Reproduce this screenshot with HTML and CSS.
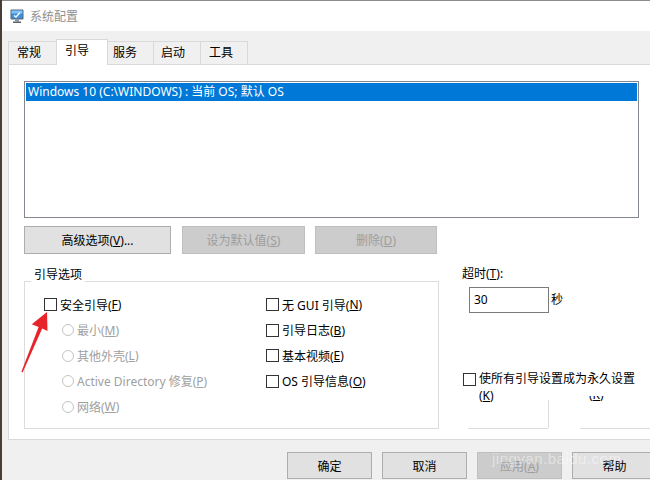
FILE: index.html
```html
<!DOCTYPE html>
<html lang="zh-CN">
<head>
  <meta charset="UTF-8" />
  <title>系统配置</title>
  <link rel="stylesheet" href="styles.css">
</head>
<body>
  <div class="window">
    <div class="titlebar">
      <svg class="app-icon" width="14" height="14" viewBox="0 0 14 14">
        <rect x="0.5" y="0.5" width="13" height="10" rx="1" fill="#5a6470"/>
        <rect x="1.5" y="1.5" width="11" height="8" fill="#3d8fe0"/>
        <rect x="1.5" y="1.5" width="11" height="3" fill="#7cc0f5"/>
        <path d="M4 6.5 L6 8 L10 3.5" stroke="#ffffff" stroke-width="1.3" fill="none"/>
        <rect x="5" y="10.5" width="4" height="2" fill="#8a929a"/>
        <rect x="3" y="12.5" width="8" height="1.5" fill="#5a6470"/>
      </svg>
      <span class="title">系统配置</span>
    </div>

    <div class="tabs">
      <div class="tab t1">常规</div>
      <div class="tab t2 active">引导</div>
      <div class="tab t3">服务</div>
      <div class="tab t4">启动</div>
      <div class="tab t5">工具</div>
    </div>

    <div class="panel">
      <div class="listbox">
        <div class="list-item selected">Windows 10 (C:\WINDOWS) : 当前 OS; 默认 OS</div>
      </div>

      <div class="btn-row">
        <button class="btn b-adv">高级选项(<u>V</u>)...</button>
        <button class="btn b-def" disabled>设为默认值(<u>S</u>)</button>
        <button class="btn b-del" disabled>删除(<u>D</u>)</button>
      </div>

      <div class="lower">
        <div class="group">
          <span class="group-title">引导选项</span>
          <div class="cols">
            <div class="col col-left">
              <div class="row"><span class="box"></span>安全引导(<u>F</u>)</div>
              <div class="row radio"><span class="circle"></span>最小(<u>M</u>)</div>
              <div class="row radio"><span class="circle"></span>其他外壳(<u>L</u>)</div>
              <div class="row radio"><span class="circle"></span>Active Directory 修复(<u>P</u>)</div>
              <div class="row radio"><span class="circle"></span>网络(<u>W</u>)</div>
            </div>
            <div class="col col-right">
              <div class="row"><span class="box"></span>无 GUI 引导(<u>N</u>)</div>
              <div class="row"><span class="box"></span>引导日志(<u>B</u>)</div>
              <div class="row"><span class="box"></span>基本视频(<u>E</u>)</div>
              <div class="row"><span class="box"></span>OS 引导信息(<u>O</u>)</div>
            </div>
          </div>
        </div>

        <div class="side">
          <div class="timeout-label">超时(<u>T</u>):</div>
          <div class="timeout-row">
            <div class="input">30</div>
            <span class="unit">秒</span>
          </div>
          <div class="perm">
            <span class="box"></span>
            <span class="perm-text">使所有引导设置成为永久设置<br>(<u>K</u>)</span>
          </div>
        </div>
      </div>

      <!-- leftovers of the overlapping capture -->
      <div class="ghost-line v1"></div>
      <div class="ghost-line h1"></div>
      <div class="ghost-line h2"></div>
      <div class="ghost-k"><span>(<u>K</u>)</span></div>
    </div>

    <div class="footer">
      <button class="btn fbtn">确定</button>
      <button class="btn fbtn">取消</button>
      <button class="btn fbtn" disabled>应用(<u>A</u>)</button>
      <button class="btn fbtn">帮助</button>
      <span class="watermark">jingyan.baidu.com</span>
    </div>

    <svg class="arrow" width="650" height="480" viewBox="0 0 650 480">
      <polygon fill="#e8242b" points="47,312 47.5,331 42.2,328.6 22.6,372.4 21.4,371.8 38.6,327 31.8,324.2"/>
    </svg>
  </div>
</body>
</html>
```

FILE: styles.css
```css
body {
  margin: 0;
  font-family: "Noto Sans", "Noto Sans CJK SC", sans-serif;
  font-size: 12px;
  color: #000;
}
.window {
  position: relative;
  width: 648px;
  height: 480px;
  overflow: hidden;
  background: #f0f0f0;
  border-left: 2px solid #4a3d35;
}
.titlebar {
  height: 30px;
  background: #fff;
  border-top: 1px solid #8c8c8c;
  display: flex;
  align-items: center;
  padding-left: 8px;
}
.app-icon {
  margin-right: 6px;
  margin-top: -1px;
}
.title {
  color: #8f8f8f;
  font-size: 12px;
}

/* tabs */
.tabs {
  height: 33px;
  display: flex;
  align-items: flex-end;
  padding-left: 6px;
}
.tab {
  box-sizing: border-box;
  height: 23px;
  line-height: 21px;
  padding-left: 8px;
  border: 1px solid #d9d9d9;
  border-bottom: none;
  background: #f0f0f0;
  margin-right: -1px;
}
.tab.t1 { width: 49px; }
.tab.t2 { width: 52px; }
.tab.t3 { width: 47px; padding-left: 5px; }
.tab.t4 { width: 48px; padding-left: 7px; }
.tab.t5 { width: 48px; }
.tab.active {
  height: 26px;
  line-height: 22px;
  background: #fff;
  margin-bottom: -1px;
  position: relative;
  z-index: 1;
}

/* panel */
.panel {
  position: relative;
  box-sizing: border-box;
  height: 376px;
  margin-left: 6px;
  background: #fff;
  border: 1px solid #d9d9d9;
  border-right: none;
  padding: 16px 0 0 15px;
}
.listbox {
  box-sizing: border-box;
  width: 615px;
  height: 137px;
  border: 1px solid #828790;
  padding: 1px;
}
.list-item {
  height: 18px;
  line-height: 18px;
  padding-left: 2px;
}
.list-item.selected {
  background: #0078d7;
  color: #fff;
}

.btn-row {
  display: flex;
  margin-top: 8px;
}
.btn {
  box-sizing: border-box;
  height: 28px;
  border: 1px solid #adadad;
  background: #e1e1e1;
  font-family: inherit;
  font-size: 12px;
  color: #000;
  padding: 0;
}
.btn:disabled {
  background: #cccccc;
  border-color: #bfbfbf;
  color: #9d9d9d;
}
.b-adv { width: 147px; }
.b-def { width: 123px; margin-left: 11px; }
.b-del { width: 122px; margin-left: 10px; }

/* lower area */
.lower {
  display: flex;
}
.group {
  position: relative;
  box-sizing: border-box;
  width: 415px;
  height: 148px;
  margin-top: 27px;
  border: 1px solid #dcdcdc;
  padding: 10px 0 0 19px;
}
.group-title {
  position: absolute;
  top: -15px;
  left: 6px;
  padding: 0 3px;
  line-height: 16px;
  background: #fff;
}
.cols {
  display: flex;
}
.col-left { width: 222px; }
.row {
  height: 25.5px;
  display: flex;
  align-items: center;
}
.box {
  box-sizing: border-box;
  width: 13px;
  height: 13px;
  border: 1px solid #333;
  margin-right: 3px;
  flex: none;
}
.radio {
  padding-left: 18px;
  color: #a0a0a0;
}
.circle {
  box-sizing: border-box;
  width: 12px;
  height: 12px;
  border: 1px solid #c4c4c4;
  border-radius: 50%;
  margin-right: 3px;
}

.side {
  margin-left: 23px;
  margin-top: 12px;
}
.timeout-label {
  line-height: 16px;
}
.timeout-row {
  display: flex;
  align-items: center;
  margin-top: 5px;
  margin-left: 7px;
}
.input {
  box-sizing: border-box;
  width: 80px;
  height: 26px;
  line-height: 24px;
  border: 1px solid #7a7a7a;
  padding-left: 4px;
}
.unit {
  margin-left: 2px;
  margin-top: -2px;
}
.perm {
  display: flex;
  align-items: flex-start;
  margin-top: 60px;
  margin-left: 1px;
}
.perm-text {
  line-height: 17px;
  margin-top: -3px;
}

.ghost-line {
  position: absolute;
  background: #dcdcdc;
}
.ghost-line.v1 { left: 539px; top: 335px; width: 1px; height: 28px; }
.ghost-line.h1 { left: 459px; top: 363px; width: 80px; height: 1px; }
.ghost-line.h2 { left: 571px; top: 363px; width: 80px; height: 1px; }
.ghost-k {
  position: absolute;
  left: 580px;
  top: 331px;
  height: 6px;
  overflow: hidden;
}
.ghost-k span {
  display: block;
  line-height: 17px;
  margin-top: -10px;
}

/* footer */
.footer {
  position: relative;
  display: flex;
  gap: 10px;
  padding: 12px 0 0 285px;
}
.fbtn {
  width: 85px;
  height: 27px;
  flex: none;
}
.watermark {
  position: absolute;
  left: 490px;
  top: 10px;
  color: rgba(255, 255, 255, 0.45);
  font-family: "Liberation Sans", sans-serif;
  font-size: 15px;
  letter-spacing: 0.5px;
}

.arrow {
  position: absolute;
  left: -2px;
  top: 0;
  pointer-events: none;
}
```
